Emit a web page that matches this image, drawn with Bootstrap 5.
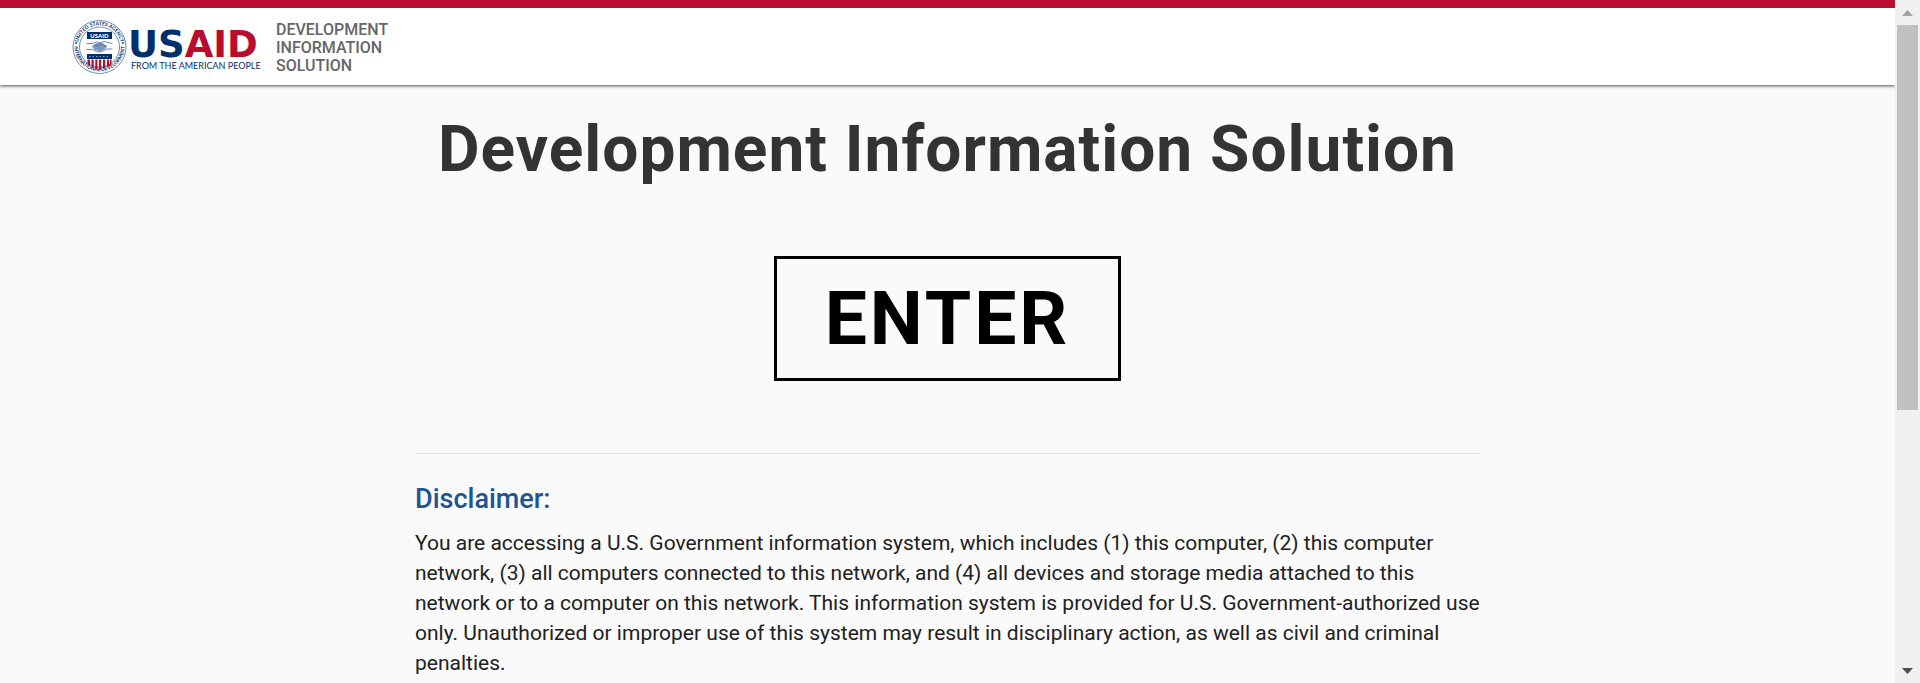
<!DOCTYPE html>
<html lang="en">
<head>
<meta charset="utf-8">
<meta name="viewport" content="width=device-width, initial-scale=1">
<title>Development Information Solution</title>
<link href="https://cdn.jsdelivr.net/npm/bootstrap@5.3.0/dist/css/bootstrap.min.css" rel="stylesheet">
<style>
  body { font-family: Roboto, "Liberation Sans", sans-serif; background: #fafafa; color: #212121; }
  .site-header { background: #fff; border-top: 8px solid #ba0c2f; box-shadow: 0 1px 3px rgba(0,0,0,.7); padding: 8px 72px 7px; }
  .site-logo { width: 190px; height: 62px; }
  .site-name { font-size: 16px; line-height: 18px; font-weight: 500; color: #666; margin-left: 14px; padding-top: 1px; width: 130px; }
  .page-body { max-width: 1065px; }
  .page-title { font-size: 64px; line-height: 76px; font-weight: 700; color: #333; letter-spacing: 1px; margin: 27px 0 68px; }
  .btn-enter { font-size: 75px; line-height: 119px; font-weight: 700; color: #000; letter-spacing: 3px; padding: 0 48px; border: 3px solid #000; border-radius: 0; }
  .rule-line { border-color: #e6e6e6; opacity: 1; margin: 72px 0 30px; }
  .notice-title { font-size: 27px; line-height: 30px; font-weight: 500; color: #205493; margin: 0 0 14px; }
  .notice-text { font-size: 21px; line-height: 30px; }
  .scroll-track { width: 25px; background: #f0f0f0; }
  .scroll-thumb { width: 21px; height: 385px; background: #c0c0c0; }
  .scroll-end { height: 25px; }
</style>
</head>
<body>
<div class="d-flex vh-100 overflow-hidden">
  <div class="flex-grow-1 overflow-hidden">
    <header class="site-header d-flex align-items-center">
      <a href="#" class="d-flex" aria-label="USAID home">
        <svg class="site-logo" viewBox="0 0 190 62" role="img" aria-label="USAID, from the American people">
          <defs>
            <path id="arcTop" d="M5.700 31a21.800 21.800 0 0 1 43.600 0"/>
            <path id="arcBottom" d="M2.300 30a25.200 25.200 0 0 0 50.400 0"/>
          </defs>
          <g fill="none" stroke="#4a6e9b">
            <circle cx="27.500" cy="31" r="26.500" stroke-width=".8"/>
            <circle cx="27.500" cy="31" r="20" stroke-width=".8"/>
          </g>
          <g fill="#002f6c" font-family="Lato, sans-serif" font-weight="700" font-size="5">
            <text text-anchor="middle"><textPath href="#arcTop" startOffset="50%">UNITED STATES AGENCY</textPath></text>
            <text text-anchor="middle"><textPath href="#arcBottom" startOffset="50%">INTERNATIONAL DEVELOPMENT</textPath></text>
          </g>
          <circle cx="4" cy="27" r=".9" fill="#002f6c"/><circle cx="51" cy="27" r=".9" fill="#002f6c"/>
          <path d="M15 16h25v7H15z" fill="#002f6c"/>
          <text x="27.500" y="21.800" text-anchor="middle" font-family="Lato, sans-serif" font-weight="900" font-size="6" fill="#fff">USAID</text>
          <path d="M20 30l5-3 5 0 5 3-2 3-5 2.500-6-2z" fill="#7f98b8"/>
          <g fill="none" stroke="#44679a" stroke-width=".8">
            <path d="M14.500 27.500h6l4-1.500 4 .5 4-1 8 2M14.500 33.500h6l4 2 4 .5 6-3h6M22 29l4 1 4-2 5 3"/>
          </g>
          <path d="M15 38h25v5H15z" fill="#002f6c"/>
          <path d="M17 40.500h21" stroke="#8fa5c2" stroke-width="1" stroke-dasharray="1.500 2"/>
          <path d="M15.500 43.500v3q0 3 2.500 4v-7zM19.500 43.500v8l2.200.8v-8.800zM23.300 43.500v9.300l2.200.7v-10zM27 43.500v11l2.200-.9v-10.100zM31 43.500v9.300l2.200-.8v-8.500zM35 43.500v7.500q4-1 4.500-4v-3.500h-1.500v4l-1 1v-5z" fill="#ba0c2f"/>
          <text x="56" y="40.500" font-family="DejaVu Sans, sans-serif" font-weight="700" font-size="37" fill="#002f6c">US<tspan fill="#ba0c2f">AID</tspan></text>
          <text x="59" y="52.500" font-family="Lato, sans-serif" font-weight="400" font-size="9" fill="#002f6c">FROM THE AMERICAN PEOPLE</text>
        </svg>
      </a>
      <div class="site-name">DEVELOPMENT INFORMATION SOLUTION</div>
    </header>
    <main class="page-body mx-auto">
      <h1 class="page-title text-center">Development Information Solution</h1>
      <div class="text-center"><button type="button" class="btn btn-enter">ENTER</button></div>
      <hr class="rule-line">
      <h2 class="notice-title">Disclaimer:</h2>
      <p class="notice-text">You are accessing a U.S. Government information system, which includes (1) this computer, (2) this computer network, (3) all computers connected to this network, and (4) all devices and storage media attached to this network or to a computer on this network. This information system is provided for U.S. Government-authorized use only. Unauthorized or improper use of this system may result in disciplinary action, as well as civil and criminal penalties.</p>
    </main>
  </div>
  <div class="scroll-track flex-shrink-0 d-flex flex-column align-items-center" aria-hidden="true">
    <div class="scroll-end d-flex align-items-center"><svg width="11" height="6" viewBox="0 0 11 6"><path d="M0 6 5.500 0 11 6z" fill="#a3a3a3"/></svg></div>
    <div class="scroll-thumb"></div>
    <div class="scroll-end d-flex align-items-center mt-auto"><svg width="11" height="6" viewBox="0 0 11 6"><path d="M0 0h11L5.500 6z" fill="#505050"/></svg></div>
  </div>
</div>
<script src="https://cdn.jsdelivr.net/npm/bootstrap@5.3.0/dist/js/bootstrap.bundle.min.js"></script>
</body>
</html>
